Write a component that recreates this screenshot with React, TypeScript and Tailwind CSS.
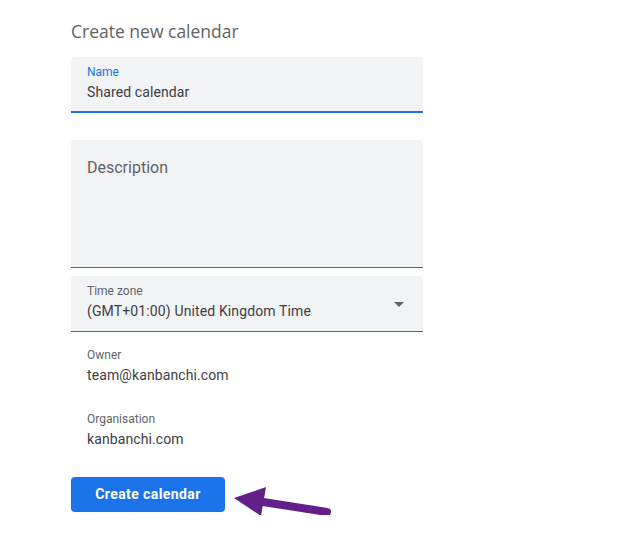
import React from "react";

export default function App() {
  return (
    <div
      className="min-h-screen w-full bg-white"
      style={{ fontFamily: "Roboto, 'Liberation Sans', sans-serif" }}
    >
      <div className="relative ml-[71px] w-[352px] pt-[19px]">
        {/* title */}
        <h1
          className="h-6 text-[17.5px] leading-6 text-[#5f6368]"
          style={{ fontFamily: "'Open Sans', Roboto, sans-serif" }}
        >
          Create new calendar
        </h1>

        {/* name */}
        <div className="mt-[14px] h-[56px] rounded-t-[4px] border-b-2 border-[#1a73e8] bg-[#f1f3f4] px-4 pt-[7px]">
          <div className="text-[12px] leading-4 text-[#1a73e8]">Name</div>
          <div className="mt-[2px] text-[14px] leading-5 tracking-[0.1px] text-[#3c4043]">
            Shared calendar
          </div>
        </div>

        {/* description */}
        <div className="mt-[27px] h-[128px] rounded-t-[4px] border-b border-[#5f6368] bg-[#f1f3f4] px-4 pt-[16px]">
          <div className="text-[16px] leading-6 text-[#5f6368]">Description</div>
        </div>

        {/* time zone */}
        <div className="mt-2 flex h-[56px] items-start justify-between rounded-t-[4px] border-b border-[#5f6368] bg-[#f1f3f4] pl-4 pr-[19px] pt-[7px]">
          <div>
            <div className="text-[12px] leading-4 text-[#5f6368]">Time zone</div>
            <div className="mt-[2px] text-[14px] leading-5 tracking-[0.13px] text-[#3c4043]">
              (GMT+01:00) United Kingdom Time
            </div>
          </div>
          <svg width="10" height="5" viewBox="0 0 10 5" className="mt-[19px]">
            <path d="M0 0h10L5 5z" fill="#5f6368" />
          </svg>
        </div>

        {/* owner */}
        <div className="px-4 pt-[15px]">
          <div className="text-[12px] leading-4 text-[#5f6368]">Owner</div>
          <div className="mt-[2px] text-[14px] leading-5 tracking-[0.1px] text-[#3c4043]">
            team@kanbanchi.com
          </div>
        </div>

        {/* organisation */}
        <div className="px-4 pt-[26px]">
          <div className="text-[12px] leading-4 text-[#5f6368]">Organisation</div>
          <div className="mt-[2px] text-[14px] leading-5 tracking-[0.1px] text-[#3c4043]">
            kanbanchi.com
          </div>
        </div>

        {/* button */}
        <div className="relative mt-[28px]">
          <button className="h-[35px] w-[154px] rounded-[4px] bg-[#1a73e8] text-[14px] font-bold tracking-[0.4px] text-white">
            Create calendar
          </button>
          <svg
            width="100"
            height="34"
            viewBox="0 0 100 34"
            className="absolute left-[162px] top-[4px]"
          >
            <path
              d="M30 21 L94 31"
              stroke="#63208a"
              strokeWidth="8"
              strokeLinecap="round"
            />
            <path d="M1 17 L33 6 L28 35 Z" fill="#63208a" />
          </svg>
        </div>
      </div>
    </div>
  );
}
